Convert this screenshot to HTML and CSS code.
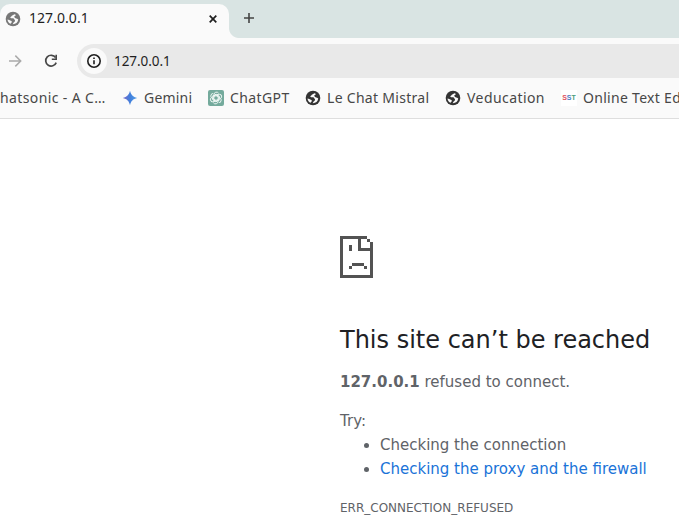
FILE: index.html
```
<!DOCTYPE html>
<html lang="en">
<head>
<meta charset="utf-8">
<title>127.0.0.1</title>
<link rel="stylesheet" href="styles.css">
</head>
<body>
<svg class="defs" aria-hidden="true">
  <symbol id="globe" viewBox="0 0 16 16">
    <circle cx="8" cy="8" r="7.300" fill="currentColor"/>
    <path d="M9.200 3.300C8.500 4.300 7.200 4.200 6.600 5 6.300 5.700 5.600 5.900 5.300 6.500 5.600 7.300 6.500 7.200 8 7.300 9.300 7.400 9.200 8.700 10 9.300 10.300 10.800 9 10.900 8.500 11.700 8.200 12.400 8 12.800 7.700 13.300 10.600 13.400 12.900 11.400 13.200 8.600 12.400 7.700 11.600 7.600 10.500 7.200 9.500 6.800 9.100 6.100 9.400 5.300 10.100 4.900 10.900 4.700 10.700 3.700ZM2.500 8.500C2.700 10.700 4 12.200 5.600 12.800 6 11.900 6.900 11.500 6.800 10.500 6.500 9.500 5.500 9.700 4.300 9Z" fill="#fafafa"/>
  </symbol>
</svg>
<header>
  <div class="tabs">
    <div class="tab">
      <svg class="icon tab-icon"><use href="#globe"/></svg>
      <span class="tab-title">127.0.0.1</span>
      <svg class="close" viewBox="0 0 10 10"><path d="M1.700 1.700 8.300 8.300M8.300 1.700 1.700 8.300"/></svg>
    </div>
    <svg class="plus" viewBox="0 0 12 12"><path d="M6 1V11M1 6H11"/></svg>
  </div>
  <div class="toolbar">
    <svg class="forward" viewBox="0 0 14 14"><path d="M1 7H12.500M7.300 1.600 12.700 7 7.300 12.400"/></svg>
    <svg class="reload" viewBox="0 0 14 14"><path class="arc" d="M11.600 3.600A5.400 5.400 0 1 0 12.200 8.600"/><path class="head" d="M13 .8V6H7.800V4.500H11.400V.8Z"/></svg>
    <div class="address">
      <span class="info"><svg viewBox="0 0 16 16"><circle cx="8" cy="8" r="6.200"/><path d="M8 7.200V11.300M8 4.600V6"/></svg></span>
      <span class="url">127.0.0.1</span>
    </div>
  </div>
  <nav class="bookmarks">
    <a class="mark chatsonic">hatsonic - A C…</a>
    <a class="mark gemini"><svg class="icon" viewBox="0 0 16 16"><defs><linearGradient id="spark"><stop offset="0" stop-color="#7b68c8"/><stop offset=".5" stop-color="#407fdc"/><stop offset="1" stop-color="#559ee5"/></linearGradient></defs><path d="M8 .8C9 5 11 7 15.200 8 11 9 9 11 8 15.200 7 11 5 9 .8 8 5 7 7 5 8 .8Z" fill="url(#spark)"/></svg><span>Gemini</span></a>
    <a class="mark chatgpt"><svg class="icon" viewBox="0 0 16 16"><rect width="16" height="16" rx="2" fill="#74aa9c"/><g class="knot"><path id="petal" d="M5.900 8.800V4.600A2.600 2.600 0 0 1 10.600 3.200M5.900 5.800 8.200 4.500 11.500 6.400"/><use href="#petal" transform="rotate(60 8 8)"/><use href="#petal" transform="rotate(120 8 8)"/><use href="#petal" transform="rotate(180 8 8)"/><use href="#petal" transform="rotate(240 8 8)"/><use href="#petal" transform="rotate(300 8 8)"/></g></svg><span>ChatGPT</span></a>
    <a class="mark mistral"><svg class="icon"><use href="#globe"/></svg><span>Le Chat Mistral</span></a>
    <a class="mark veducation"><svg class="icon"><use href="#globe"/></svg><span>Veducation</span></a>
    <a class="mark editor"><b class="sst"><i>S</i><i>S</i><i>T</i></b><span>Online Text Ed</span></a>
  </nav>
</header>
<main>
  <svg class="sad" viewBox="0 0 11 14" shape-rendering="crispEdges"><path fill-rule="evenodd" d="M0 0H9V1H7V4H10V2H11V14H0ZM1 1V13H10V5H6V1ZM9 1H10V2H9ZM3 3H4V5H3ZM4 9H8V10H4ZM3 10H4V11H3ZM8 10H9V11H8Z"/></svg>
  <h1>This site can’t be reached</h1>
  <p><strong>127.0.0.1</strong> refused to connect.</p>
  <div class="suggestions">
    <p>Try:</p>
    <ul><li>Checking the connection</li><li><a>Checking the proxy and the firewall</a></li></ul>
  </div>
  <div class="code">ERR_CONNECTION_REFUSED</div>
</main>
</body>
</html>
```
FILE: styles.css
```
* { box-sizing: border-box; }
html, body { margin: 0; height: 100%; overflow: hidden; background: #fff; }
svg { display: block; flex: none; }
.defs { position: absolute; width: 0; height: 0; }
header { height: 119px; background: #fafafa; border-bottom: 1px solid #dedede; font: 14px/20px "Noto Sans", sans-serif; color: #474747; }

.tabs { height: 38px; display: flex; background: #d9e4e3; }
.tab { position: relative; width: 229px; height: 34px; margin-top: 4px; padding: 0 11px 5px 5px; display: flex; align-items: center; background: #fafafa; border-radius: 10px 10px 0 0; }
.tab::after { content: ""; position: absolute; left: 229px; bottom: 0; width: 10px; height: 10px; background: radial-gradient(circle at 100% 0, transparent 9.5px, #fafafa 10.5px); }
.icon { width: 16px; height: 16px; color: #333; }
.tab-icon { color: #777; }
.tab-title { position: relative; top: -1px; margin-left: 8px; flex: 1; color: #1f1f1f; font-size: 14px; letter-spacing: .05px; }
.close { width: 10px; height: 10px; fill: none; stroke: #1f1f1f; stroke-width: 1.7; }
.plus { width: 12px; height: 12px; margin: 12px 0 0 14px; fill: none; stroke: #444; stroke-width: 1.6; }

.toolbar { height: 40px; margin-top: 3px; padding: 3px 0 3px 8px; display: flex; align-items: center; }
.forward { width: 14px; height: 14px; fill: none; stroke: #aaa; stroke-width: 1.5; }
.reload { width: 14px; height: 14px; margin-left: 22px; }
.reload .arc { fill: none; stroke: #474747; stroke-width: 1.7; }
.reload .head { fill: #474747; }
.address { height: 34px; margin-left: 19px; flex: 1; display: flex; align-items: center; padding-left: 4px; background: #e9e9e9; border-radius: 17px 0 0 17px; }
.info { width: 26px; height: 26px; display: grid; place-items: center; background: #fafafa; border-radius: 50%; }
.info svg { width: 16px; height: 16px; fill: none; stroke: #1f1f1f; stroke-width: 1.6; }
.url { margin-left: 7px; color: #1f1f1f; font-size: 13.5px; letter-spacing: -.05px; }

.bookmarks { height: 34px; display: flex; align-items: center; white-space: nowrap; overflow: hidden; }
.mark { flex: none; display: flex; align-items: center; gap: 6px; }
.chatsonic { width: 122px; letter-spacing: .38px; }
.gemini { width: 86px; letter-spacing: .2px; }
.chatgpt { width: 97px; letter-spacing: .4px; }
.mistral { width: 140px; letter-spacing: .29px; }
.veducation { width: 116px; letter-spacing: .43px; }
.editor { letter-spacing: .3px; }
.knot { fill: none; stroke: #f4faf8; stroke-width: .9; }
.sst { width: 16px; height: 16px; font: bold 7px/16px "Liberation Sans", sans-serif; letter-spacing: 0; text-align: center; background: #fff; }
.sst i { font-style: normal; color: #e0525c; }
.sst i + i { color: #4b7fc4; }
.sst i + i + i { color: #4a9d7b; }

main { margin-left: 340px; padding-top: 117px; color: #5f6368; font: 15px/24px "DejaVu Sans", sans-serif; white-space: nowrap; }
.sad { width: 33px; height: 42px; fill: #535353; }
h1 { margin: 47px 0 15px; color: #202124; font-size: 24px; line-height: 30px; font-weight: 400; }
p { margin: 0; }
.suggestions { margin-top: 15px; }
ul { margin: 0; padding-left: 40px; }
.suggestions a { color: #1a73d8; }
.code { margin-top: 17px; font-size: 12px; line-height: 20px; }
```
